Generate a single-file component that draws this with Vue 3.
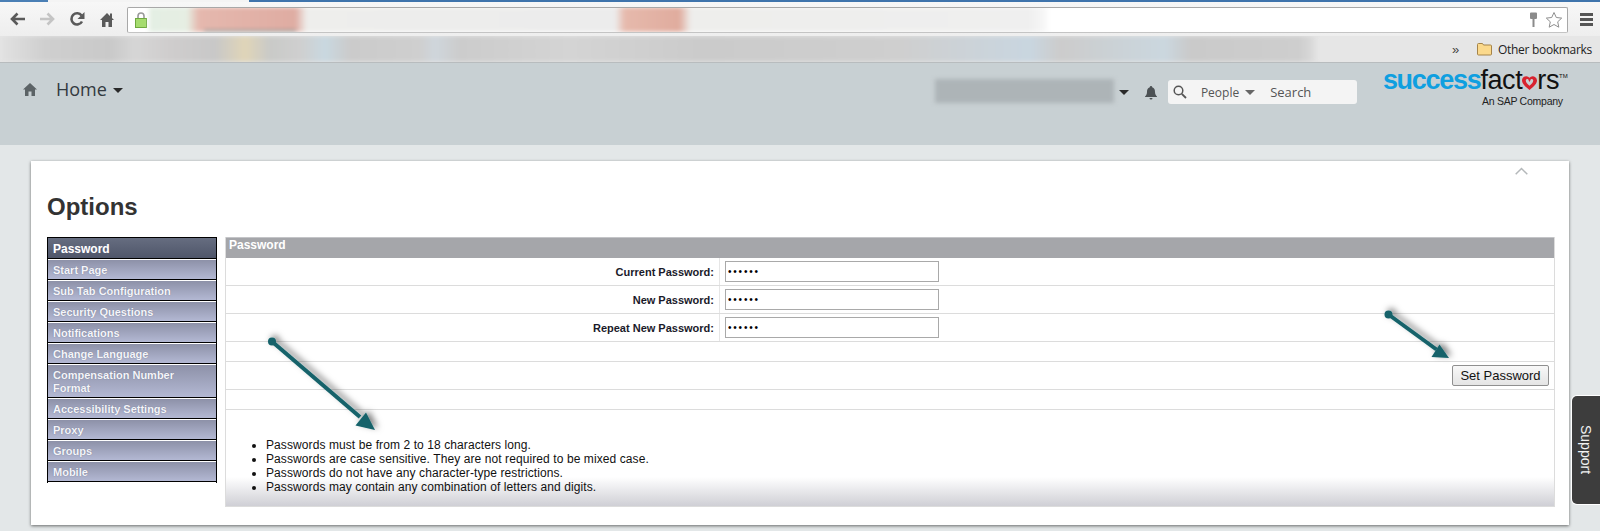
<script setup>
const navItems = [
  { label: 'Password', active: true },
  { label: 'Start Page' },
  { label: 'Sub Tab Configuration' },
  { label: 'Security Questions' },
  { label: 'Notifications' },
  { label: 'Change Language' },
  { label: 'Compensation Number Format' },
  { label: 'Accessibility Settings' },
  { label: 'Proxy' },
  { label: 'Groups' },
  { label: 'Mobile' }
]

const fields = ['Current Password:', 'New Password:', 'Repeat New Password:']

const rules = [
  'Passwords must be from 2 to 18 characters long.',
  'Passwords are case sensitive. They are not required to be mixed case.',
  'Passwords do not have any character-type restrictions.',
  'Passwords may contain any combination of letters and digits.'
]
</script>

<template>
  <div class="page">
    <div class="tabstrip"></div>

    <div class="toolbar">
      <svg class="tool" width="16" height="14" viewBox="0 0 16 14"><path d="M15 7H3M7.500 1.500 2 7l5.500 5.500" fill="none" stroke="#5a5a5a" stroke-width="2.600"/></svg>
      <svg class="tool forward" width="16" height="14" viewBox="0 0 16 14"><path d="M1 7h12M8.500 1.500 14 7l-5.500 5.500" fill="none" stroke="#c4c4c4" stroke-width="2.600"/></svg>
      <svg class="tool reload" width="16" height="16" viewBox="0 0 16 16"><path d="M13 10.500A5.600 5.600 0 1 1 12.600 4.600" fill="none" stroke="#5a5a5a" stroke-width="2.600"/><path d="M15.500 1v7h-7z" fill="#5a5a5a"/></svg>
      <svg class="tool home" width="14" height="15" viewBox="0 0 14 15"><path d="M7 1 0 8h2v7h3.500v-5h3v5H12V8h2l-2-2V1.500h-2v2.500z" fill="#5a5a5a"/></svg>
      <div class="address">
        <svg class="lock" width="12" height="16" viewBox="0 0 12 16"><path d="M3 7V4a3 3 0 0 1 6 0v3" fill="none" stroke="#9a9a9a" stroke-width="1.600"/><rect x=".5" y="6.500" width="11" height="9" fill="#a5dc6e" stroke="#6fa83f"/></svg>
        <div class="url-blur"></div>
        <div class="address-end">
          <svg width="9" height="16" viewBox="0 0 9 16"><path d="M1 1.500a1 1 0 0 1 1-1h5a1 1 0 0 1 1 1V6a1 1 0 0 1-1 1H5.500v8h-2V7H2a1 1 0 0 1-1-1z" fill="#8b8b8b"/></svg>
          <svg width="18" height="18" viewBox="0 0 18 18"><path d="m9 1.500 2.300 5 5.400.6-4 3.700 1.100 5.400L9 13.500l-4.800 2.700 1.100-5.400-4-3.700 5.400-.6z" fill="#fff" stroke="#8e8e8e"/></svg>
        </div>
      </div>
      <div class="menu-icon"><span></span><span></span><span></span></div>
    </div>

    <div class="bookmarks">
      <div class="bookmarks-blur"></div>
      <span class="chevrons">»</span>
      <svg class="folder" width="15" height="14" viewBox="0 0 15 14"><path d="M.5 2.500a1 1 0 0 1 1-1h4l1 1.500h7a1 1 0 0 1 1 1v8a1 1 0 0 1-1 1h-12a1 1 0 0 1-1-1z" fill="#fbd98c" stroke="#a5844a"/></svg>
      <span class="other">Other bookmarks</span>
    </div>

    <header class="topbar">
      <svg class="top-home" width="14" height="13" viewBox="0 0 14 13"><path d="M7 0 0 6.500h2V13h3.500V8.500h3V13H12V6.500h2z" fill="#5c6366"/></svg>
      <span class="home-label">Home</span>
      <span class="caret home-caret"></span>
      <div class="user-blur"></div>
      <span class="caret user-caret"></span>
      <svg class="bell" width="12" height="14" viewBox="0 0 12 14"><path d="M6 0a1.200 1.200 0 0 1 1.200 1.300C9.300 1.900 10 3.600 10 6c0 2.500 1 3.500 2 4.500V11H0v-.5C1 9.500 2 8.500 2 6c0-2.400.7-4.100 2.800-4.700A1.200 1.200 0 0 1 6 0zM4.500 12h3a1.500 1.500 0 0 1-3 0z" fill="#4c5154"/></svg>
      <div class="search">
        <svg width="14" height="14" viewBox="0 0 14 14"><circle cx="5.500" cy="5.500" r="4.300" fill="none" stroke="#555" stroke-width="1.500"/><path d="m8.800 8.800 4.200 4.200" stroke="#555" stroke-width="1.800"/></svg>
        <span class="people">People</span>
        <span class="caret people-caret"></span>
        <span class="search-word">Search</span>
      </div>
      <div class="logo">
        <div class="logo-word">
          <span class="logo-blue">success</span><span class="logo-black">fact</span><svg class="heart" width="15" height="14" viewBox="0 0 15 14"><path d="M7.500 14C2.500 10 0 7.500 0 4.300A4.200 4.200 0 0 1 7.500 1.800 4.200 4.200 0 0 1 15 4.300C15 7.500 12.500 10 7.500 14zM7.500 9.800c2-1.700 3.700-3.300 3.700-5.300a1.400 1.400 0 0 0-2.800-.3L7.500 6l-.9-1.800a1.400 1.400 0 0 0-2.800.3c0 2 1.700 3.600 3.700 5.300z" fill="#d8232f" fill-rule="evenodd"/></svg><span class="logo-black">rs</span><sup class="tm">TM</sup>
        </div>
        <div class="logo-sub">An SAP Company</div>
      </div>
    </header>

    <main class="card">
      <svg class="collapse" width="13" height="8" viewBox="0 0 13 8"><path d="M.7 7.300 6.500 1.500l5.800 5.800" fill="none" stroke="#b4b8ba" stroke-width="1.500"/></svg>
      <h1 class="title">Options</h1>
      <div class="content">
        <nav class="sidenav">
          <a
            v-for="item in navItems"
            :key="item.label"
            class="nav-item"
            :class="{ active: item.active }"
          >{{ item.label }}</a>
        </nav>
        <section class="panel">
          <div class="panel-head">Password</div>
          <div v-for="field in fields" :key="field" class="field-row">
            <label class="field-label">{{ field }}</label>
            <div class="field-value"><input class="field-input" type="password" value="aaaaaa" /></div>
          </div>
          <div class="spacer-row"></div>
          <div class="action-row"><button class="set-btn">Set Password</button></div>
          <div class="spacer-row last"></div>
          <ul class="rules">
            <li v-for="rule in rules" :key="rule">{{ rule }}</li>
          </ul>
        </section>
      </div>
    </main>

    <svg class="arrows" width="1600" height="531" viewBox="0 0 1600 531">
      <defs>
        <filter id="arrow-shadow" x="-30%" y="-30%" width="160%" height="160%">
          <feDropShadow dx="3" dy="-2" stdDeviation="3" flood-color="#000" flood-opacity=".5"/>
        </filter>
      </defs>
      <g filter="url(#arrow-shadow)" fill="#14626a">
        <circle cx="272" cy="341.500" r="4"/>
        <path d="M272 341.500 360 417" stroke="#14626a" stroke-width="4"/>
        <path d="m375 430-19.500-4.500 10.500-13z"/>
        <circle cx="1388.500" cy="314.500" r="4"/>
        <path d="m1388.500 314.500 48 35" stroke="#14626a" stroke-width="4"/>
        <path d="m1449 358-17.500-1 8-12.500z"/>
      </g>
    </svg>

    <aside class="support">Support</aside>
  </div>
</template>

<style>
html, body {
  margin: 0;
  background: #e5e9ea;
}
</style>

<style scoped>
.page {
  position: relative;
  width: 1600px;
  height: 531px;
  overflow: hidden;
  background: #e3e7e8;
  font-family: "Liberation Sans", Arial, sans-serif;
  color: #111;
}

.tabstrip {
  height: 2px;
  background: linear-gradient(90deg, #4a7fb5 0, #4a7fb5 48px, #f4f4f4 48px, #f4f4f4 249px, #3f74ac 249px);
}

.toolbar {
  height: 34px;
  display: flex;
  align-items: center;
  background: linear-gradient(#f7f7f7, #eeeeee);
}

.tool {
  flex: none;
  margin-left: 10px;
}

.forward {
  margin-left: 13px;
}

.reload {
  margin-left: 14px;
}

.home {
  margin-left: 15px;
}

.address {
  width: 1441px;
  height: 26px;
  margin: 1px 0 0 13px;
  display: flex;
  align-items: center;
  background: #fff;
  border: 1px solid #a8a8a8;
  border-bottom-color: #c4c4c4;
  border-radius: 2px;
  box-sizing: border-box;
  overflow: hidden;
}

.lock {
  flex: none;
  margin-left: 7px;
}

.url-blur {
  width: 898px;
  height: 25px;
  margin-left: 2px;
  background:
    linear-gradient(#8c8f8c, #8c8f8c) 55px 23px / 92px 2px no-repeat,
    linear-gradient(90deg, #e4efe4 0, #e6eee3 38px, #e5b8ae 50px, #dfaca2 146px, #eeeeec 158px, #ececec 466px, #e6b9ac 476px, #e0ac9e 530px, #eeeeec 542px, #efefef 880px, #f8f8f8 898px);
  filter: blur(2px);
}

.address-end {
  margin-left: auto;
  margin-right: 4px;
  display: flex;
  align-items: center;
  gap: 7px;
}

.menu-icon {
  margin-left: 12px;
  display: flex;
  flex-direction: column;
  gap: 2px;
}

.menu-icon span {
  display: block;
  width: 13px;
  height: 3px;
  background: #555;
}

.bookmarks {
  height: 26px;
  display: flex;
  align-items: center;
  background: #e6e6e6;
  overflow: hidden;
}

.bookmarks-blur {
  width: 1316px;
  height: 26px;
  background: linear-gradient(90deg, #e2e2e2 0, #cfcfcf 45px, #c9c9c9 110px, #d6d6d6 135px, #cfcdcd 170px, #c8c8c8 215px, #e0d5b8 245px, #c9cac8 270px, #cfcfcf 300px, #c9d8e0 325px, #cbcbcb 350px, #cfcfcf 420px, #cfd6dc 435px, #cccccc 460px, #d4d4d4 570px, #cbcbcb 700px, #cfcfcf 900px, #c9d6e0 1030px, #cccccc 1060px, #cbd7df 1165px, #cacaca 1190px, #cecece 1300px, #dedede 1316px);
  filter: blur(2px);
}

.chevrons {
  margin-left: 136px;
  width: 16px;
  font-size: 13px;
  color: #444;
  font-family: "Liberation Sans", sans-serif;
}

.folder {
  margin-left: 9px;
  flex: none;
}

.other {
  margin-left: 6px;
  font-size: 12px;
  white-space: nowrap;
  font-family: "Open Sans", sans-serif;
  letter-spacing: -.3px;
  color: #222;
}

.topbar {
  height: 83px;
  box-sizing: border-box;
  display: flex;
  align-items: flex-start;
  background: #c8d0d3;
  border-top: 1px solid #b8bcbe;
}

.top-home {
  margin: 20px 0 0 23px;
  flex: none;
}

.home-label {
  margin: 14px 0 0 19px;
  font-family: "Open Sans", sans-serif;
  font-size: 18px;
  line-height: 25px;
  color: #333a40;
}

.caret {
  width: 0;
  height: 0;
  flex: none;
  border-left: 5px solid transparent;
  border-right: 5px solid transparent;
  border-top: 5px solid #2a2a2a;
}

.home-caret {
  margin: 25px 0 0 6px;
}

.user-blur {
  width: 179px;
  height: 24px;
  margin: 16px 0 0 812px;
  background: #adb4b7;
  filter: blur(2px);
}

.user-caret {
  margin: 27px 0 0 5px;
}

.bell {
  margin: 23px 0 0 16px;
  flex: none;
}

.search {
  width: 189px;
  height: 24px;
  margin: 17px 0 0 11px;
  padding-left: 5px;
  box-sizing: border-box;
  display: flex;
  align-items: center;
  background: #f4f4f4;
  border-radius: 3px;
  font-family: "Open Sans", sans-serif;
  font-size: 12px;
  color: #555;
}

.people {
  margin-left: 14px;
}

.people-caret {
  margin: 1px 0 0 6px;
  border-top-color: #666;
}

.search-word {
  margin-left: 15px;
  font-size: 13px;
}

.logo {
  margin: 2px 0 0 26px;
  width: 190px;
  flex: none;
}

.logo-word {
  display: flex;
  align-items: baseline;
  height: 30px;
  line-height: 30px;
  font-size: 27px;
  white-space: nowrap;
}

.logo-blue {
  color: #0f9fe0;
  font-weight: 700;
  letter-spacing: -1.300px;
}

.logo-black {
  color: #111;
  letter-spacing: -.4px;
}

.heart {
  flex: none;
  align-self: flex-end;
  margin: 0 0 5px 0;
}

.tm {
  font-size: 6px;
  line-height: 6px;
  align-self: flex-start;
  margin: 8px 0 0 0;
}

.logo-sub {
  margin: 0 0 0 99px;
  font-size: 10.500px;
  line-height: 12px;
  letter-spacing: -.25px;
  color: #222;
}

.card {
  margin: 16px 31px 0;
  height: 364px;
  box-sizing: border-box;
  padding: 6px 14px 18px 16px;
  display: flex;
  flex-direction: column;
  background: #fff;
  box-shadow: 0 1px 3px rgba(0, 0, 0, .55);
}

.collapse {
  align-self: flex-end;
  margin-right: 27px;
  flex: none;
}

.title {
  margin: 17px 0 15px;
  font-size: 24px;
  line-height: 30px;
  font-weight: 700;
  color: #333;
}

.content {
  flex: 1;
  min-height: 0;
  display: flex;
  gap: 8px;
}

.sidenav {
  width: 170px;
  height: 246px;
  flex: none;
  box-sizing: border-box;
  display: flex;
  flex-direction: column;
  border: 1px solid #000;
  border-width: 1px 1px 0;
}

.nav-item {
  display: block;
  padding: 3px 5px 2px;
  font-size: 11px;
  line-height: 14px;
  font-weight: 700;
  color: #f4f5fa;
  text-shadow: 0 0 1px #6a6e88;
  background: linear-gradient(#8d91a8, #b3b8d3);
  border-top: 1px solid #fff;
  border-bottom: 1px solid #000;
}

.nav-item:nth-child(7) {
  line-height: 13px;
  padding-top: 4px;
  padding-bottom: 2px;
}

.nav-item.active {
  padding-top: 4px;
  font-size: 12px;
  color: #fff;
  background: linear-gradient(#666d80, #4f566a);
  border-top: 0;
}

.panel {
  flex: 1;
  min-width: 0;
  box-sizing: border-box;
  display: flex;
  flex-direction: column;
  border: 1px solid #dcdcdc;
  border-width: 0 1px 1px;
  background: linear-gradient(#fff 0, #fff 240px, #cfcfd5 100%);
}

.panel-head {
  height: 21px;
  box-sizing: border-box;
  padding-left: 3px;
  font-size: 12px;
  line-height: 14px;
  font-weight: 700;
  color: #fff;
  background: #a5a6aa;
  border-top: 1px solid #c4c5c8;
}

.field-row {
  height: 28px;
  box-sizing: border-box;
  display: flex;
  align-items: stretch;
  border-bottom: 1px solid #dcdcdc;
  background: #fff;
}

.field-label {
  width: 494px;
  flex: none;
  padding-right: 5px;
  box-sizing: border-box;
  display: flex;
  align-items: center;
  justify-content: flex-end;
  font-size: 11px;
  font-weight: 700;
  color: #1a1a2a;
  border-right: 1px solid #e6e6e6;
}

.field-value {
  display: flex;
  align-items: center;
  padding-left: 5px;
}

.field-input {
  width: 214px;
  height: 21px;
  box-sizing: border-box;
  padding: 0 1px 0 2px;
  border: 1px solid #a9a9a9;
  background: #fff;
  font-family: "Liberation Sans", sans-serif;
  font-size: 10px;
  letter-spacing: 1.800px;
  color: #000;
  outline: none;
}

.spacer-row {
  height: 20px;
  box-sizing: border-box;
  border-bottom: 1px solid #dcdcdc;
  background: #fff;
}

.spacer-row.last {
  background: #fff;
}

.action-row {
  height: 28px;
  box-sizing: border-box;
  display: flex;
  align-items: center;
  justify-content: flex-end;
  padding-right: 5px;
  border-bottom: 1px solid #dcdcdc;
  background: #fff;
}

.set-btn {
  width: 97px;
  height: 21px;
  padding: 0;
  font-family: "Liberation Sans", sans-serif;
  font-size: 13px;
  color: #111;
  background: linear-gradient(#f8f8f8, #e4e4e4);
  border: 1px solid #8f8f8f;
  border-radius: 2px;
}

.rules {
  margin: 0;
  padding: 28px 0 0 40px;
  font-size: 12px;
  line-height: 14px;
  letter-spacing: .09px;
  color: #111;
}

.arrows {
  position: absolute;
  left: 0;
  top: 0;
  pointer-events: none;
}

.support {
  position: absolute;
  right: 0;
  top: 396px;
  width: 28px;
  height: 108px;
  box-sizing: border-box;
  display: flex;
  align-items: center;
  justify-content: center;
  writing-mode: vertical-rl;
  font-size: 14px;
  color: #f2f2f2;
  background: #3d3d3d;
  border-radius: 5px 0 0 5px;
  box-shadow: 0 0 0 1px #fff;
}
</style>
